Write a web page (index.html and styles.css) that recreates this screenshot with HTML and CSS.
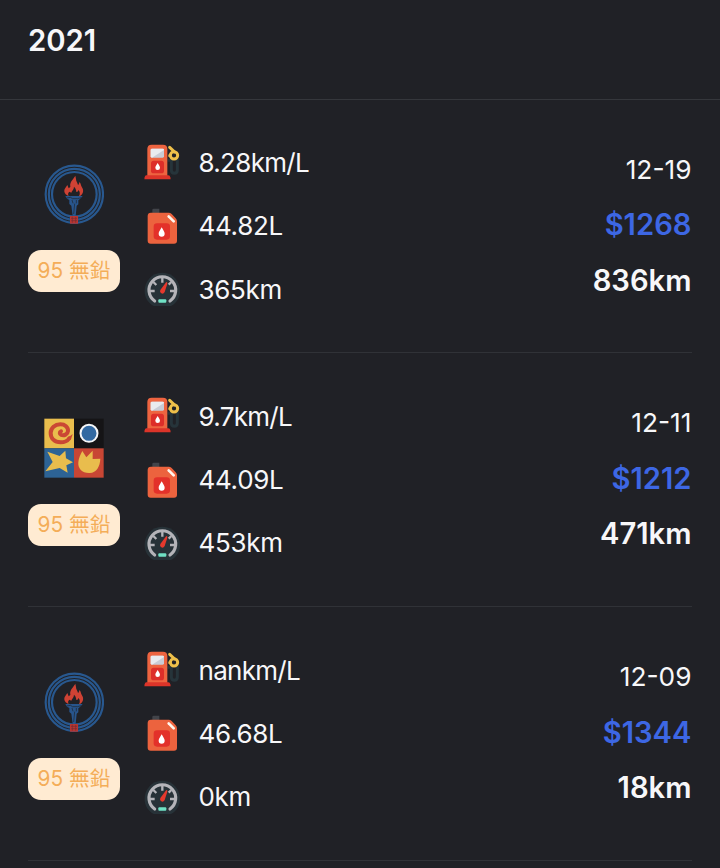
FILE: index.html
```html
<!DOCTYPE html>
<html lang="zh-Hant">
<head>
<meta charset="utf-8">
<title>2021</title>
<link rel="stylesheet" href="styles.css">
</head>
<body>
<svg class="defs" aria-hidden="true">
  <symbol id="torch" viewBox="0 0 180 180">
    <g fill="none" stroke="#28588f" stroke-width="6.5">
      <circle cx="91" cy="91" r="86"/>
      <circle cx="91" cy="91" r="76.5"/>
      <circle cx="91" cy="91" r="67"/>
    </g>
    <path fill="#cf4234" d="M72 95C61 90 58 80 64 72l6-9 4 10 5-4c-2-9 2-16 6-21 3-5 7-9 9-13l2 10c0 8 5 11 6 18 3-2 4-6 4-9 5 4 4 9 7 14 8 11 5 24-8 29 4-8 3-14-2-19-1 5-4 7-6 5-1-7-3-12-7-15 0 9-7 12-8 18l-6-3c-4 4-5 8-2 12z"/>
    <path fill="#28558d" d="M64 96h52l-8 9-5 4v12l-5 4-3 31h-9l-4-31-6-5v-12l-7-4z"/>
    <path fill="none" stroke="#202227" stroke-width="2" d="M68 102l12-2 5 4h16l10-3M84 108l3 10M97 108v10M92 119l-3 31"/>
    <path fill="#b83632" d="M78 156h24v23H78z"/>
    <path fill="none" stroke="#742c32" stroke-width="2" d="M81 163h18M82 170h17M85 158v18M95 159v17"/>
  </symbol>
  <symbol id="tiles" viewBox="0 0 180 180">
    <path fill="#e9bd4d" d="M1 2h89v89H1z"/>
    <path fill="#151416" d="M90 2h89v89H90z"/>
    <path fill="#2d6395" d="M1 91h89v88H1z"/>
    <path fill="#c84634" d="M90 91h89v88H90z"/>
    <path fill="none" stroke="#ca4734" stroke-width="12" stroke-linecap="round" d="M76 61C70 69 60 73 50 73 31 73 20 61 20 45c0-15 13-26 29-26 14 0 24 9 23 20-1 10-12 15-20 12-6-3-6-9-1-11"/>
    <path fill="#ca4734" d="M86 48c-2 9-5 15-9 19l-7-9c6-2 11-6 16-10z"/>
    <circle cx="135" cy="46" r="25.5" fill="#3269a2" stroke="#f5f6f8" stroke-width="6"/>
    <path fill="#e9bd4d" d="M10 101l37 13 17-16 2 23 21 12-20 9 4 22-24-14-43 10 22-28z"/>
    <path fill="#e9bd4d" d="M115 99l12 19 19-20v25l23-1c-1 23-11 42-32 43-22 1-36-13-34-32 1-13 7-25 12-34z"/>
  </symbol>
  <symbol id="pump" viewBox="-2 4 120 120">
    <path fill="none" stroke="#26343a" stroke-width="9" d="M75 56h11v29q0 10 9 10t9-10V42"/>
    <path fill="#ee6440" d="M14 105V22Q14 9 27 9h34q13 0 13 13v83z"/>
    <path fill="#dc3429" d="M11 101h66q5 0 6 6l1 6H5l1-6q1-6 5-6z"/>
    <rect x="24" y="21" width="40" height="27" rx="4" fill="#c8ccd6"/>
    <path fill="#e9ebef" d="M28 21h32q4 0 4 4L28 48q-4 0-4-4V25q0-4 4-4z"/>
    <rect x="25" y="57" width="39" height="38" rx="8" fill="#dd2e29"/>
    <path fill="#fff" d="M45 64c4 7 7 10 7 14a7 7 0 0 1-14 0c0-4 3-7 7-14z"/>
    <path fill="none" stroke="#eec04a" stroke-width="9" stroke-linecap="round" d="M81 17l15 14"/>
    <circle cx="94" cy="41" r="11" fill="none" stroke="#eec04a" stroke-width="9"/>
    <path stroke="#eec04a" stroke-width="7" d="M77 42h9"/>
  </symbol>
  <symbol id="can" viewBox="-1 -4 120 120">
    <path fill="#42444a" d="M30 8q0-4 4-4h17v15H30z"/>
    <path fill="#ec633e" d="M26 16h53q5 0 9 4l12 13q4 4 4 10v57q0 9-9 9H25q-9 0-9-9V26q0-10 10-10z"/>
    <path fill="none" stroke="#fff7ef" stroke-width="8" stroke-linecap="round" d="M79 27l15 15"/>
    <rect x="34" y="48" width="49" height="49" rx="10" fill="#e3312a"/>
    <path fill="#fff" d="M58 60c5 9 9 14 9 19a9 9 0 0 1-18 0c0-5 4-10 9-19z"/>
  </symbol>
  <symbol id="gauge" viewBox="-1 -2 120 120">
    <path fill="#273238" d="M34 109C-14 83 6 9 60 9s74 74 26 100z"/>
    <path fill="none" stroke="#b4b4b9" stroke-width="9.5" stroke-linecap="round" d="M37 94A40 40 0 1 1 83 94"/>
    <path stroke="#b4b4b9" stroke-width="7" d="M60 23v16M22 64h15M83 64h15M33 37l9 9M87 37l-8 8"/>
    <path fill="#e5392d" d="M72 37q4 0 3 5L67 67q-4 7-10 4t-3-10z"/>
    <rect x="48" y="89" width="24" height="10" rx="3" fill="#70e2c5"/>
  </symbol>
</svg>

<header class="year">2021</header>
<main class="list">
  <article class="entry">
    <div class="brand">
      <svg class="logo"><use href="#torch"/></svg>
      <span class="grade">95 無鉛</span>
    </div>
    <ul class="stats">
      <li class="economy"><svg class="icon"><use href="#pump"/></svg>8.28km/L</li>
      <li><svg class="icon"><use href="#can"/></svg>44.82L</li>
      <li><svg class="icon"><use href="#gauge"/></svg>365km</li>
    </ul>
    <div class="summary">
      <time>12-19</time>
      <strong class="cost">$1268</strong>
      <strong>836km</strong>
    </div>
  </article>
  <article class="entry">
    <div class="brand">
      <svg class="logo"><use href="#tiles"/></svg>
      <span class="grade">95 無鉛</span>
    </div>
    <ul class="stats">
      <li class="economy"><svg class="icon"><use href="#pump"/></svg>9.7km/L</li>
      <li><svg class="icon"><use href="#can"/></svg>44.09L</li>
      <li><svg class="icon"><use href="#gauge"/></svg>453km</li>
    </ul>
    <div class="summary">
      <time>12-11</time>
      <strong class="cost">$1212</strong>
      <strong>471km</strong>
    </div>
  </article>
  <article class="entry">
    <div class="brand">
      <svg class="logo"><use href="#torch"/></svg>
      <span class="grade">95 無鉛</span>
    </div>
    <ul class="stats">
      <li class="economy"><svg class="icon"><use href="#pump"/></svg>nankm/L</li>
      <li><svg class="icon"><use href="#can"/></svg>46.68L</li>
      <li><svg class="icon"><use href="#gauge"/></svg>0km</li>
    </ul>
    <div class="summary">
      <time>12-09</time>
      <strong class="cost">$1344</strong>
      <strong>18km</strong>
    </div>
  </article>
</main>
</body>
</html>
```
FILE: styles.css
```css
* {
  box-sizing: border-box;
}

body {
  margin: 0;
  height: 868px;
  overflow: hidden;
  background: #202126;
  color: #f7f7f9;
  font-family: Inter, "Noto Sans CJK TC", sans-serif;
  font-size: 26px;
}

.defs {
  display: none;
}

.year {
  height: 99.6px;
  padding: 20px 28px;
  border-bottom: 1px solid #35373c;
  font-size: 29.3px;
  font-weight: 600;
  line-height: 41px;
}

.list {
  padding: 0 28px;
}

.entry {
  display: flex;
  height: 253.8px;
  border-bottom: 1px solid #303237;
}

.brand {
  display: flex;
  flex-direction: column;
  align-items: center;
  width: 92px;
  padding-top: 64.6px;
}

.logo {
  width: 60px;
  height: 60px;
}

.grade {
  width: 92px;
  height: 42px;
  margin-top: 26px;
  border-radius: 13px;
  background: #ffebd2;
  color: #f4ad58;
  font-size: 20.8px;
  font-weight: 400;
  line-height: 42.6px;
  text-align: center;
  white-space: nowrap;
}

.stats {
  margin: 0 0 0 22px;
  padding: 31.3px 0 0;
  list-style: none;
}

.stats li {
  display: flex;
  align-items: center;
  gap: 16.5px;
  height: 63.3px;
  letter-spacing: -0.3px;
}

.stats .economy {
  letter-spacing: -0.7px;
}

.icon {
  width: 40px;
  height: 40px;
}

.summary {
  display: flex;
  flex-direction: column;
  align-items: flex-end;
  margin-left: auto;
  padding: 43px 0.5px 0 0;
  line-height: 55.4px;
}

.summary time {
  line-height: 54.6px;
  font-size: 26.3px;
}

.summary strong {
  font-size: 29.2px;
  font-weight: 600;
}

.summary .cost {
  color: #3d67e4;
}
```
